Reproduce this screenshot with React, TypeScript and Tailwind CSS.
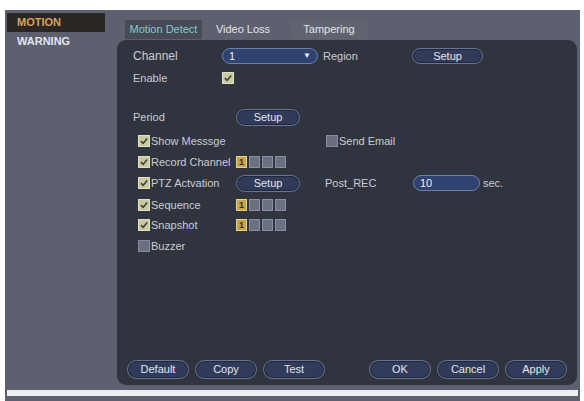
import { useState } from 'react';

const btn =
  'flex items-center justify-center rounded-full border border-[#6c7490] bg-[#313b59] text-[11px] text-[#e2e4ea] shadow-[inset_0_0_0_1px_#1f2740]';

function Check({ checked }: { checked: boolean }) {
  return (
    <div
      className={`w-[12px] h-[12px] flex items-center justify-center border ${
        checked ? 'bg-[#c9c8a2] border-[#e3e1c4]' : 'bg-[#6b6f80] border-[#858a9b]'
      }`}
    >
      {checked && (
        <svg viewBox="0 0 12 12" className="w-[10px] h-[10px]">
          <path d="M2.2 6.2 L5 8.8 L9.8 3" fill="none" stroke="#3f4236" strokeWidth="1.8" />
        </svg>
      )}
    </div>
  );
}

function CheckLabel({ checked, label }: { checked: boolean; label: string }) {
  return (
    <div className="flex items-center gap-[1px]">
      <Check checked={checked} />
      <span className="text-[11px] text-[#c9ccd4] leading-none">{label}</span>
    </div>
  );
}

function Channels() {
  return (
    <div className="flex gap-[2px]">
      {[1, 2, 3, 4].map((n) => (
        <div
          key={n}
          className={`w-[11px] h-[12px] flex items-center justify-center text-[9px] font-bold leading-none border ${
            n === 1 ? 'bg-[#c2a54e] border-[#e6d08a] text-[#3a3020]' : 'bg-[#6c7083] border-[#8a8fa2] text-transparent'
          }`}
        >
          {n}
        </div>
      ))}
    </div>
  );
}

const tabs = ['Motion Detect', 'Video Loss', 'Tampering'];

export default function App() {
  const [menu] = useState('MOTION');
  const [tab] = useState('Motion Detect');

  return (
    <div className="w-[584px] h-[401px] bg-white overflow-hidden pt-[10px] pl-[5px] pr-[4px] font-['Liberation_Sans',Arial,sans-serif]">
      <div className="h-[391px] bg-[#5c606f] flex flex-col">
        <div className="flex h-[380px]">
          {/* Sidebar */}
          <div className="w-[112px] pt-[3px] pl-[2px]">
            {['MOTION', 'WARNING'].map((m) => (
              <div
                key={m}
                className={`w-[98px] h-[19px] flex items-center pl-[10px] text-[11px] font-bold ${
                  m === menu ? 'bg-[#2b2624] text-[#d9a35a]' : 'text-[#e4e6ee]'
                }`}
              >
                {m}
              </div>
            ))}
          </div>

          {/* Main */}
          <div className="flex-1 flex flex-col pr-[3px]">
            <div className="h-[30px] flex items-end pl-[8px] gap-[2px]">
              {tabs.map((t) => (
                <div
                  key={t}
                  className={`h-[19px] mb-[1px] flex items-center justify-center text-[11px] ${
                    t === tab
                      ? 'w-[77px] bg-[#474b57] text-[#86c9c9]'
                      : t === 'Tampering'
                      ? 'w-[78px] ml-[6px] bg-[#60646f] text-[#e2e4ea]'
                      : 'w-[78px] text-[#e2e4ea]'
                  }`}
                >
                  {t}
                </div>
              ))}
            </div>

            <div className="h-[345px] bg-[#30343e] rounded-[9px] flex flex-col pt-[6px] text-[11px] text-[#c9ccd4]">
              {/* Channel / Region */}
              <div className="h-[20px] flex items-center pl-[16px]">
                <span className="w-[89px] text-[12px]">Channel</span>
                <div className="w-[96px] h-[16px] rounded-full bg-[#2f4270] border border-[#6d7ea8] flex items-center justify-between px-[6px] text-[#eef0f6]">
                  <span>1</span>
                  <span className="text-[8px]">▼</span>
                </div>
                <span className="w-[89px] ml-[5px]">Region</span>
                <div className={`${btn} w-[71px] h-[16px]`}>Setup</div>
              </div>

              {/* Enable */}
              <div className="h-[20px] mt-[2px] flex items-center pl-[16px]">
                <span className="w-[89px]">Enable</span>
                <Check checked />
              </div>

              {/* Period */}
              <div className="h-[20px] mt-[19px] flex items-center pl-[16px]">
                <span className="w-[103px]">Period</span>
                <div className={`${btn} w-[64px] h-[17px]`}>Setup</div>
              </div>

              {/* Show Message / Send Email */}
              <div className="h-[20px] mt-[4px] flex items-center pl-[21px]">
                <div className="w-[98px]">
                  <CheckLabel checked label="Show Messsge" />
                </div>
                <div className="ml-[90px]">
                  <CheckLabel checked={false} label="Send Email" />
                </div>
              </div>

              {/* Record Channel */}
              <div className="h-[20px] mt-[1px] flex items-center pl-[21px]">
                <div className="w-[98px]">
                  <CheckLabel checked label="Record Channel" />
                </div>
                <Channels />
              </div>

              {/* PTZ */}
              <div className="h-[20px] mt-[1px] flex items-center pl-[21px]">
                <div className="w-[98px]">
                  <CheckLabel checked label="PTZ Actvation" />
                </div>
                <div className={`${btn} w-[64px] h-[17px]`}>Setup</div>
                <span className="w-[88px] ml-[25px]">Post_REC</span>
                <div className="w-[67px] h-[16px] rounded-full bg-[#2f4270] border border-[#6d7ea8] flex items-center px-[6px] text-[#eef0f6]">
                  10
                </div>
                <span className="ml-[3px]">sec.</span>
              </div>

              {/* Sequence */}
              <div className="h-[20px] mt-[2px] flex items-center pl-[21px]">
                <div className="w-[98px]">
                  <CheckLabel checked label="Sequence" />
                </div>
                <Channels />
              </div>

              {/* Snapshot */}
              <div className="h-[20px] flex items-center pl-[21px]">
                <div className="w-[98px]">
                  <CheckLabel checked label="Snapshot" />
                </div>
                <Channels />
              </div>

              {/* Buzzer */}
              <div className="h-[20px] mt-[1px] flex items-center pl-[21px]">
                <CheckLabel checked={false} label="Buzzer" />
              </div>

              {/* Footer buttons */}
              <div className="mt-auto mb-[6px] flex items-center px-[10px]">
                <div className="flex gap-[6px]">
                  {['Default', 'Copy', 'Test'].map((b) => (
                    <div key={b} className={`${btn} w-[62px] h-[19px]`}>
                      {b}
                    </div>
                  ))}
                </div>
                <div className="ml-auto flex gap-[6px]">
                  {['OK', 'Cancel', 'Apply'].map((b) => (
                    <div key={b} className={`${btn} w-[62px] h-[19px]`}>
                      {b}
                    </div>
                  ))}
                </div>
              </div>
            </div>
          </div>
        </div>

        {/* Bottom strip */}
        <div className="h-[6px] mx-[2px] bg-[#eceef2]" />
      </div>
    </div>
  );
}
